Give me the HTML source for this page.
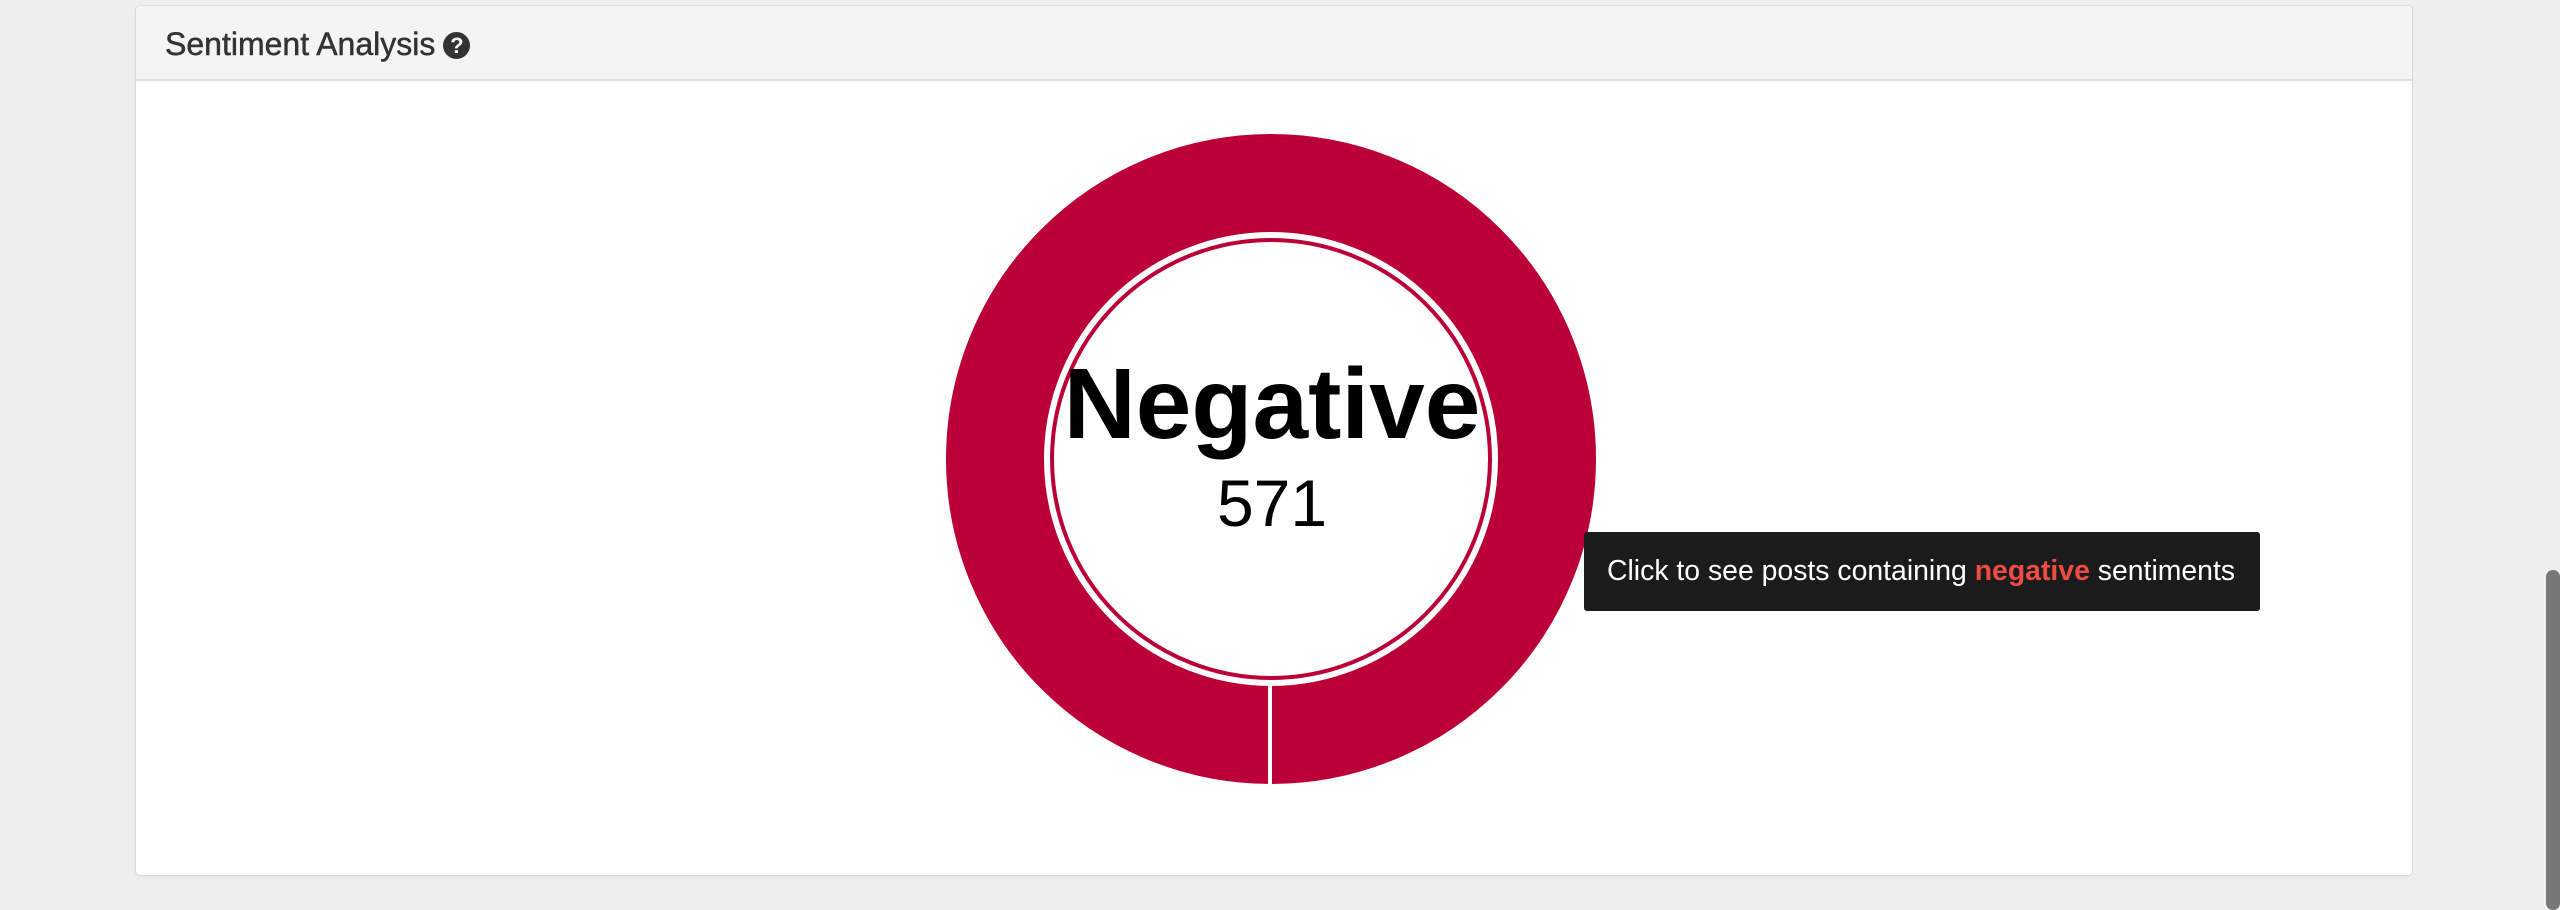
<!DOCTYPE html>
<html><head><style>
html,body{margin:0;padding:0;width:2560px;height:892px;background:#eeeeee;overflow:hidden;font-family:"Liberation Sans",Arial,sans-serif;}
.panel{position:absolute;left:135px;top:5px;width:2276px;height:869px;background:#fff;border:1px solid #dcdcdc;border-radius:5px;box-shadow:0 1px 2px rgba(0,0,0,.06);overflow:hidden;}
.hdr{height:75px;background:#f4f4f4;border-bottom:2px solid #dedede;box-sizing:border-box;}
.title{position:absolute;left:29px;top:20px;font-size:32px;color:#333;-webkit-text-stroke:0.5px #333;}
.q{display:inline-block;width:27px;height:27px;border-radius:50%;background:#333;color:#f4f4f4;font-size:22px;font-weight:bold;text-align:center;line-height:28px;vertical-align:2px;margin-left:8px;-webkit-text-stroke:0;}
.tip{position:absolute;left:1584px;top:532px;width:676px;height:79px;background:#1b1b1b;border-radius:3px;color:#fff;font-size:28.4px;line-height:79px;box-sizing:border-box;padding-left:23px;}
.tip b{color:#ef4b44;}
.sb{position:absolute;left:2546px;top:570px;width:14px;height:340px;background:#777;border-radius:7px;}
</style></head><body>
<div class="panel"><div class="hdr"></div><div class="title">Sentiment Analysis<span class="q">?</span></div></div>
<svg style="position:absolute;left:0;top:0" width="2560" height="892">
<circle cx="1271" cy="459" r="276" fill="none" stroke="#bb0037" stroke-width="98"/>
<circle cx="1271" cy="459" r="219" fill="none" stroke="#bb0037" stroke-width="4"/>
<rect x="1268" y="686" width="4" height="100" fill="#fff"/>
<text x="1272" y="438" text-anchor="middle" font-family="Liberation Sans, Arial, sans-serif" font-weight="bold" font-size="100" fill="#000">Negative</text>
<text x="1272" y="526" text-anchor="middle" font-family="Liberation Sans, Arial, sans-serif" font-size="66" fill="#000">571</text>
</svg>
<div class="tip">Click to see posts containing <b>negative</b> sentiments</div>
<div class="sb"></div>
</body></html>
